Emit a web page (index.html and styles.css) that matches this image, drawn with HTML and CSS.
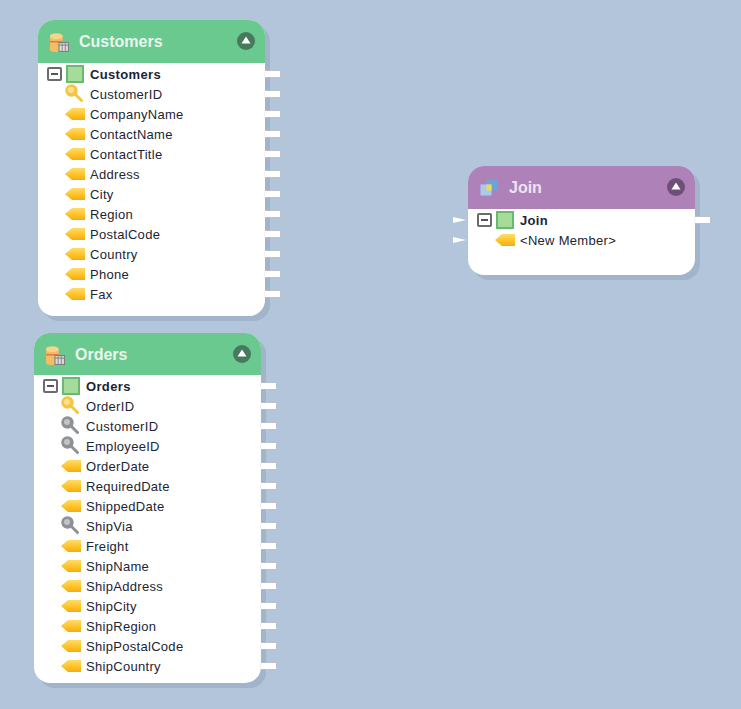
FILE: index.html
```html
<!DOCTYPE html>
<html lang="en">
<head>
<meta charset="utf-8">
<title>Query diagram</title>
<link rel="stylesheet" href="styles.css">
</head>
<body>
<svg class="defs" width="0" height="0" aria-hidden="true">
  <defs>
    <linearGradient id="tagfill" x1="0" y1="0" x2="0" y2="1">
      <stop offset="0" stop-color="#ffdc6a"/>
      <stop offset="0.5" stop-color="#fdc62e"/>
      <stop offset="1" stop-color="#f4ac0e"/>
    </linearGradient>
    <symbol id="tag" viewBox="0 0 20 12">
      <path d="M0 6 L7 0 H20 V12 H7 Z" fill="url(#tagfill)"/>
    </symbol>
    <symbol id="key" viewBox="0 0 18 18">
      <path d="M9.5 9.5 L16.5 16.5" stroke="currentColor" stroke-width="3" stroke-linecap="round"/>
      <circle cx="6.5" cy="6.5" r="6.2" fill="currentColor"/>
      <circle cx="6" cy="6" r="3" fill="#fff" fill-opacity="0.45"/>
    </symbol>
    <symbol id="db" viewBox="0 0 18 18">
      <path d="M0 3 V16 C0 18.6 12 18.6 12 16 V3 Z" fill="#f3be63"/>
      <ellipse cx="6" cy="3" rx="6" ry="2.8" fill="#f8d48c"/>
      <path d="M0 7.5 H12 V9 H0 Z" fill="#e07a4a"/>
      <rect x="8.5" y="9" width="9" height="8.5" fill="#dcdcdc" stroke="#7d7d7d"/>
      <path d="M8.5 11.5 H17.5 M11.5 9 V17.5 M14.5 9 V17.5" stroke="#8d8d8d"/>
    </symbol>
    <symbol id="join" viewBox="0 0 18 18">
      <rect x="6.5" y="0.5" width="11" height="11" fill="#6da4d8"/>
      <rect x="0.5" y="5.5" width="11" height="11" fill="#a6cdf0"/>
      <rect x="6.5" y="5.5" width="5" height="6" fill="#f7d84a"/>
    </symbol>
    <symbol id="collapse" viewBox="0 0 18 18">
      <circle cx="9" cy="9" r="9" fill="currentColor"/>
      <path d="M9 4.5 L13.5 11.5 H4.5 Z" fill="#fff"/>
    </symbol>
  </defs>
</svg>

<main class="canvas">
  <section class="node node-customers">
    <header class="node-head head-green">
      <svg class="head-icon"><use href="#db"/></svg>
      <h2 class="node-title">Customers</h2>
      <svg class="toggle toggle-green"><use href="#collapse"/></svg>
    </header>
    <ul class="rows">
      <li class="row"><span class="expander"></span><span class="table-box"></span><strong class="name">Customers</strong><i class="pin"></i></li>
      <li class="row field"><svg class="ico key-gold"><use href="#key"/></svg><span class="name">CustomerID</span><i class="pin"></i></li>
      <li class="row field"><svg class="ico tag"><use href="#tag"/></svg><span class="name">CompanyName</span><i class="pin"></i></li>
      <li class="row field"><svg class="ico tag"><use href="#tag"/></svg><span class="name">ContactName</span><i class="pin"></i></li>
      <li class="row field"><svg class="ico tag"><use href="#tag"/></svg><span class="name">ContactTitle</span><i class="pin"></i></li>
      <li class="row field"><svg class="ico tag"><use href="#tag"/></svg><span class="name">Address</span><i class="pin"></i></li>
      <li class="row field"><svg class="ico tag"><use href="#tag"/></svg><span class="name">City</span><i class="pin"></i></li>
      <li class="row field"><svg class="ico tag"><use href="#tag"/></svg><span class="name">Region</span><i class="pin"></i></li>
      <li class="row field"><svg class="ico tag"><use href="#tag"/></svg><span class="name">PostalCode</span><i class="pin"></i></li>
      <li class="row field"><svg class="ico tag"><use href="#tag"/></svg><span class="name">Country</span><i class="pin"></i></li>
      <li class="row field"><svg class="ico tag"><use href="#tag"/></svg><span class="name">Phone</span><i class="pin"></i></li>
      <li class="row field"><svg class="ico tag"><use href="#tag"/></svg><span class="name">Fax</span><i class="pin"></i></li>
    </ul>
  </section>

  <section class="node node-orders">
    <header class="node-head head-green">
      <svg class="head-icon"><use href="#db"/></svg>
      <h2 class="node-title">Orders</h2>
      <svg class="toggle toggle-green"><use href="#collapse"/></svg>
    </header>
    <ul class="rows">
      <li class="row"><span class="expander"></span><span class="table-box"></span><strong class="name">Orders</strong><i class="pin"></i></li>
      <li class="row field"><svg class="ico key-gold"><use href="#key"/></svg><span class="name">OrderID</span><i class="pin"></i></li>
      <li class="row field"><svg class="ico key-grey"><use href="#key"/></svg><span class="name">CustomerID</span><i class="pin"></i></li>
      <li class="row field"><svg class="ico key-grey"><use href="#key"/></svg><span class="name">EmployeeID</span><i class="pin"></i></li>
      <li class="row field"><svg class="ico tag"><use href="#tag"/></svg><span class="name">OrderDate</span><i class="pin"></i></li>
      <li class="row field"><svg class="ico tag"><use href="#tag"/></svg><span class="name">RequiredDate</span><i class="pin"></i></li>
      <li class="row field"><svg class="ico tag"><use href="#tag"/></svg><span class="name">ShippedDate</span><i class="pin"></i></li>
      <li class="row field"><svg class="ico key-grey"><use href="#key"/></svg><span class="name">ShipVia</span><i class="pin"></i></li>
      <li class="row field"><svg class="ico tag"><use href="#tag"/></svg><span class="name">Freight</span><i class="pin"></i></li>
      <li class="row field"><svg class="ico tag"><use href="#tag"/></svg><span class="name">ShipName</span><i class="pin"></i></li>
      <li class="row field"><svg class="ico tag"><use href="#tag"/></svg><span class="name">ShipAddress</span><i class="pin"></i></li>
      <li class="row field"><svg class="ico tag"><use href="#tag"/></svg><span class="name">ShipCity</span><i class="pin"></i></li>
      <li class="row field"><svg class="ico tag"><use href="#tag"/></svg><span class="name">ShipRegion</span><i class="pin"></i></li>
      <li class="row field"><svg class="ico tag"><use href="#tag"/></svg><span class="name">ShipPostalCode</span><i class="pin"></i></li>
      <li class="row field"><svg class="ico tag"><use href="#tag"/></svg><span class="name">ShipCountry</span><i class="pin"></i></li>
    </ul>
  </section>

  <section class="node node-join">
    <header class="node-head head-purple">
      <svg class="head-icon join-icon"><use href="#join"/></svg>
      <h2 class="node-title">Join</h2>
      <svg class="toggle toggle-purple"><use href="#collapse"/></svg>
    </header>
    <ul class="rows">
      <li class="row"><i class="inlet"></i><span class="expander"></span><span class="table-box"></span><strong class="name">Join</strong><i class="pin"></i></li>
      <li class="row field"><i class="inlet"></i><svg class="ico tag"><use href="#tag"/></svg><span class="name">&lt;New Member&gt;</span></li>
    </ul>
  </section>
</main>
</body>
</html>
```
FILE: styles.css
```css
* { box-sizing: border-box; }
html, body { margin: 0; height: 100%; }
body {
  background: #b3c5da;
  font-family: "Liberation Sans", Arial, sans-serif;
  overflow: hidden;
}
.defs { position: absolute; }
.canvas { position: relative; width: 741px; height: 709px; }

.node {
  position: absolute;
  width: 227px;
  background: #fff;
  border-radius: 16px;
  box-shadow: 5px 5px 0 #a2b4ca;
}
.node-customers { left: 38px; top: 20px; height: 296px; }
.node-orders { left: 34px; top: 333px; height: 350px; }
.node-join { left: 468px; top: 166px; height: 109px; }

.node-head {
  display: flex;
  align-items: center;
  height: 43px;
  padding: 0 10px 0 12px;
  border-radius: 16px 16px 0 0;
}
.node-orders .node-head { height: 42px; padding-top: 1px; }
.head-green { background: #69c98f; }
.head-purple { background: #ae82b9; }
.head-icon { width: 19px; height: 19px; flex: none; margin-top: 1px; }
.join-icon { width: 18px; height: 18px; margin: 0 1px 0 0; }
.node-title {
  flex: 1;
  margin: 0 0 0 10px;
  color: #e9f6ee;
  font-size: 16px;
  font-weight: 700;
}
.head-purple .node-title { color: #eee3f0; }
.toggle { width: 18px; height: 18px; flex: none; margin-top: -2px; }
.toggle-green { color: #47795c; }
.toggle-purple { color: #6f4f79; }

.rows { list-style: none; margin: 0; padding: 1px 0 0; }
.row {
  position: relative;
  display: flex;
  align-items: center;
  height: 20px;
  padding-left: 9px;
  color: #1c2533;
  font-size: 13px;
  letter-spacing: 0.3px;
}
.row.field { padding-left: 27px; }
.row strong { font-weight: 700; letter-spacing: 0.35px; }
.expander {
  position: relative;
  width: 15px;
  height: 14px;
  flex: none;
  border: 2px solid #6b6b6b;
  border-radius: 2px;
  background: #fff;
}
.expander::after {
  content: "";
  position: absolute;
  left: 2px;
  right: 2px;
  top: 4px;
  height: 2px;
  background: #555;
}
.table-box {
  width: 18px;
  height: 18px;
  flex: none;
  margin: 0 6px 0 4px;
  border: 2px solid #6bb872;
  background: #a5dc9a;
}
.ico { flex: none; }
.ico.tag { width: 20px; height: 12px; margin-right: 5px; }
.ico.key-gold, .ico.key-grey { width: 18px; height: 18px; margin-right: 7px; margin-top: -3px; }
.key-gold { color: #f4c641; }
.key-grey { color: #8e9296; }
.name { white-space: nowrap; }

.pin {
  position: absolute;
  right: -15px;
  top: 7px;
  width: 15px;
  height: 6px;
  background: #fff;
  box-shadow: 1px 0 1px rgba(190, 195, 200, 0.8), 0 1px 1px rgba(190, 195, 200, 0.6), 0 -1px 1px rgba(190, 195, 200, 0.6);
}
.inlet {
  position: absolute;
  left: -15px;
  top: 7px;
  width: 13px;
  height: 6px;
  background: #fff;
  clip-path: polygon(0 0, 100% 50%, 0 100%);
}
```
